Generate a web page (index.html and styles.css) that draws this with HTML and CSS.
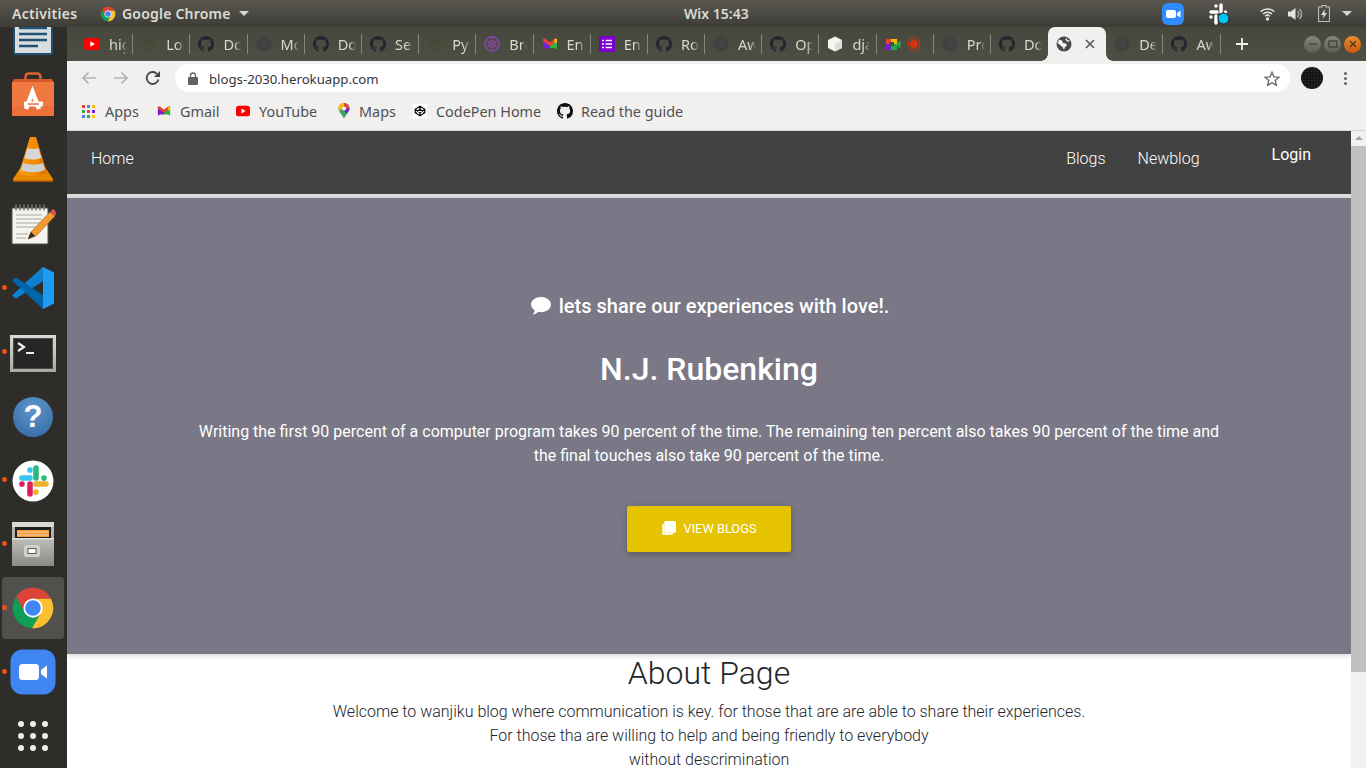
FILE: index.html
```html
<!DOCTYPE html>
<html lang="en">
<head>
<meta charset="utf-8">
<title>blogs-2030.herokuapp.com</title>
<link rel="stylesheet" href="styles.css">
</head>
<body>
<svg class="defs" width="0" height="0" aria-hidden="true">
  <defs>
    <linearGradient id="metal" x1="0" y1="0" x2="0" y2="1"><stop offset="0" stop-color="#bdbdba"/><stop offset="1" stop-color="#8a8a87"/></linearGradient>
    <linearGradient id="termframe" x1="0" y1="0" x2="0" y2="1"><stop offset="0" stop-color="#d9d9d6"/><stop offset="1" stop-color="#a9a9a6"/></linearGradient>
    <linearGradient id="cone" x1="0" y1="0" x2="1" y2="0"><stop offset="0" stop-color="#f9a01b"/><stop offset=".6" stop-color="#f28a00"/><stop offset="1" stop-color="#d96e00"/></linearGradient>
    <symbol id="gh" viewBox="0 0 16 16"><path fill-rule="evenodd" d="M8 0C3.58 0 0 3.58 0 8c0 3.54 2.29 6.53 5.47 7.59.4.07.55-.17.55-.38 0-.19-.01-.82-.01-1.49-2.01.37-2.53-.49-2.69-.94-.09-.23-.48-.94-.82-1.13-.28-.15-.68-.52-.01-.53.63-.01 1.08.58 1.23.82.72 1.21 1.87.87 2.33.66.07-.52.28-.87.51-1.07-1.78-.2-3.64-.89-3.64-3.95 0-.87.31-1.59.82-2.15-.08-.2-.36-1.02.08-2.12 0 0 .67-.21 2.2.82.64-.18 1.32-.27 2-.27.68 0 1.36.09 2 .27 1.53-1.04 2.2-.82 2.2-.82.44 1.1.16 1.92.08 2.12.51.56.82 1.27.82 2.15 0 3.07-1.87 3.75-3.65 3.95.29.25.54.73.54 1.48 0 1.07-.01 1.93-.01 2.2 0 .21.15.46.55.38A8.01 8.01 0 0 0 16 8c0-4.42-3.58-8-8-8z"/></symbol>
    <symbol id="chrome" viewBox="0 0 48 48">
      <path fill="#db4437" d="M24 14H43.6A22 22 0 0 0 5.5 12L15.34 29Z"/>
      <path fill="#0f9d58" d="M5.5 12A22 22 0 0 0 22.9 46L32.66 29H15.34Z"/>
      <path fill="#fbc02d" d="M22.9 46A22 22 0 0 0 43.6 14H24L32.66 29Z"/>
      <circle cx="24" cy="24" r="10.5" fill="#fff"/><circle cx="24" cy="24" r="8.5" fill="#4285f4"/>
    </symbol>
    <symbol id="yt" viewBox="0 0 16 16"><rect y="2" width="16" height="12" rx="3" fill="#f00"/><path d="M6.3 5.2v5.6L11 8z" fill="#fff"/></symbol>
    <symbol id="tree" viewBox="0 0 16 16"><path d="M8 15V7M8 7C6 3 3 3 1 5M8 7c2-4 5-4 7-2M8 7C7 3 5 1 4 1M8 7c1-4 3-6 4-6M8 8C6 7 3 8 2 10M8 8c2-1 5 0 6 2" fill="none" stroke="#414b33" stroke-width="2"/></symbol>
    <symbol id="globe-dark" viewBox="0 0 16 16"><circle cx="8" cy="8" r="7.500" fill="#3f4240"/><path d="M4 4c2 1 4 0 5 2s-2 2-1 4 3 1 4 0" fill="none" stroke="#454845" stroke-width="2"/></symbol>
    <symbol id="gmail" viewBox="0 0 16 16"><path d="M1 3.200 8 8.400V12H3.500L1 13.500z" fill="#7a1fd0"/><path d="M15 3.200 8 8.400V12h4.500l2.500 1.500z" fill="#2fb344"/><path d="M1 3l2 -.5L8 6.400l5-3.900 2 .5V5L8 10 1 5z" fill="#ea4335"/><path d="M12.500 3 15 2.600V6l-2.500 1.800z" fill="#fbbc04"/></symbol>
  </defs>
</svg>

<header class="topbar">
  <div class="top-left">
    <span class="activities">Activities</span>
    <svg class="top-chrome" width="16" height="16"><use href="#chrome"/></svg>
    <span class="appname">Google Chrome</span>
    <span class="caret"></span>
  </div>
  <span class="clock">Wix 15:43</span>
  <div class="top-right">
    <svg class="tray-zoom" width="22" height="22" viewBox="0 0 22 22"><rect width="22" height="22" rx="6" fill="#2d8cff"/><rect x="4" y="7" width="10" height="8" rx="2" fill="#fff"/><path d="M15 10l3.500-2.500v7L15 12.500z" fill="#fff"/></svg>
    <svg class="tray-slack" width="21" height="22" viewBox="0 0 21 22"><g fill="none" stroke="#fff" stroke-width="3.400" stroke-linecap="round"><path d="M2 9h6M7 3v.1M12 2v7M16.500 9v.1M2 14v.1M7 13v7M12 14h6"/></g><circle cx="14.500" cy="15.500" r="5.500" fill="#00c4ee" stroke="#1d1d1b"/></svg>
    <svg class="tray-wifi" width="15" height="14" viewBox="0 0 15 14"><g fill="none" stroke="#e4e4dd" stroke-width="1.500"><path d="M.7 4.600a10 10 0 0 1 13.600 0"/><path d="M3 7a6.800 6.800 0 0 1 9 0"/><path d="M5.200 9.200a3.400 3.400 0 0 1 4.600 0"/></g><circle cx="7.500" cy="12" r="1.700" fill="#e4e4dd"/></svg>
    <svg class="tray-sound" width="15" height="14" viewBox="0 0 15 14"><path d="M0 4.500h3L7.500 1v12L3 9.500H0z" fill="#e4e4dd"/><path d="M9.500 4a4 4 0 0 1 0 6M11.500 2a7 7 0 0 1 0 10" fill="none" stroke="#a9a9a2" stroke-width="1.400"/></svg>
    <svg class="tray-batt" width="12" height="17" viewBox="0 0 12 17"><path d="M4 .5h4V2h3.500v14.500H.5V2H4z" fill="none" stroke="#bdbdb6" stroke-width="1.200"/><path d="M7 4 3 10h2.500L4.500 14 9 8H6.500z" fill="#dcdcd5"/></svg>
    <span class="caret tray-caret"></span>
  </div>
</header>

<div class="desktop">
  <nav class="dock">
    <div class="dock-item dock-first">
      <svg width="48" height="48" viewBox="0 0 48 48"><rect x="4" y="-4" width="40" height="51" rx="2" fill="#1d4f71"/><rect x="6" y="-3" width="36" height="48" fill="#d9dde0"/><rect x="23" y="2" width="15" height="12" fill="#7e8a94"/><path d="M10 9h11M10 14h11M10 20h28M10 26h28M10 32h28M10 38h19" stroke="#1f5377" stroke-width="2.500"/></svg>
    </div>
    <div class="dock-item">
      <svg width="48" height="48" viewBox="0 0 48 48"><path d="M16.500 12V5q0-3.500 3.500-3.500h8q3.500 0 3.500 3.500v7" fill="none" stroke="#d9622e" stroke-width="2.500"/><path d="M5 7h38l2 4H3z" fill="#d65a28"/><rect x="3" y="10" width="42" height="24" fill="#f0793f"/><rect x="3" y="34" width="42" height="10" fill="#ec7138"/><path d="M17 37 23.500 20 30 37" fill="none" stroke="#fff" stroke-width="4.500"/><rect x="15" y="29.500" width="19" height="5" rx="1" fill="#fff"/><rect x="19" y="31.300" width="11" height="1.500" fill="#ec7138"/></svg>
    </div>
    <div class="dock-item">
      <svg width="48" height="48" viewBox="0 0 48 48"><path d="M4 43l8-12h24l8 12q0 3-2 3H6q-2 0-2-3z" fill="#e88a00"/><path d="M4 44.500h40v1.500H4z" fill="#a85400"/><path d="M21 1h6l11 36q-14 7-28 0z" fill="url(#cone)"/><path d="M18.500 12q5.500 2 11 0l2.900 10q-8.400 3-16.800 0z" fill="#d6d6d6"/><path d="M14 27q10 3.500 20 0l2.200 7q-12 4.500-24.400 0z" fill="#cfcfcf"/></svg>
    </div>
    <div class="dock-item">
      <svg width="48" height="48" viewBox="0 0 48 48"><rect x="3" y="8" width="36" height="36" rx="1" fill="#f3f3f0" stroke="#55554f"/><g stroke="#75756e" stroke-width="1.500" stroke-linecap="round"><path d="M7 5v5M11 5v5M15 5v5M19 5v5M23 5v5M27 5v5M31 5v5M35 5v5"/></g><g stroke="#a8a8a2"><path d="M7 15h26M7 19h26M7 23h24M7 27h20M7 34h12M7 38h10"/></g><path d="M19 39l3-7 19-20 5 4-19 20z" fill="#f09a30" stroke="#a9671a" stroke-width=".7"/><path d="M41 12l3-3q3 1 3 5l-1 2z" fill="#d9534f"/><path d="M19 39l3-7 4 4z" fill="#2b2b2b"/></svg>
    </div>
    <div class="dock-item has-dot">
      <svg width="48" height="48" viewBox="0 0 48 48"><path d="M34 3 45 8.500V39.500L34 45Z" fill="#1f9cf0"/><path d="M34 3V17L7 34.500 3 31.500Z" fill="#0a84d6"/><path d="M3 16.500 7 13.500 34 31V45Z" fill="#0065a9"/><path d="M34 3V17L24 23.500 16 19Z" fill="#0f7fcf"/></svg>
    </div>
    <div class="dock-item has-dot">
      <svg width="48" height="48" viewBox="0 -2 48 48"><rect x="1" y="5" width="46" height="37" fill="url(#termframe)"/><rect x="4.500" y="8.500" width="39" height="30" fill="#262625"/><rect x="4.500" y="8.500" width="39" height="30" fill="none" stroke="#4a4a48"/><path d="M9 13l6 4-6 4" fill="none" stroke="#eee" stroke-width="2.200"/><path d="M17 23h8" stroke="#eee" stroke-width="2"/></svg>
    </div>
    <div class="dock-item">
      <div class="help-ball">?</div>
    </div>
    <div class="dock-item has-dot">
      <svg width="48" height="48" viewBox="0 -1 48 48"><circle cx="24" cy="24" r="20.500" fill="#fff"/><g fill="none" stroke-width="5.600" stroke-linecap="round"><path d="M13 21H21M21 13v.1" stroke="#36c5f0"/><path d="M27 11V21M35 21v.1" stroke="#2eb67d"/><path d="M27 27H37M27 35v.1" stroke="#ecb22e"/><path d="M21 27V37M13 27v.1" stroke="#e01e5a"/></g></svg>
    </div>
    <div class="dock-item has-dot">
      <svg width="48" height="48" viewBox="0 0 48 48"><rect x="3" y="2" width="42" height="44" rx="2" fill="url(#metal)"/><rect x="3" y="2" width="42" height="5" fill="#d9d9d6"/><rect x="6" y="7" width="36" height="12" fill="#1f1f1e"/><rect x="8" y="10" width="32" height="7" fill="#f39a3d"/><path d="M8 12h32M8 15h32" stroke="#fbd19c"/><rect x="3" y="18" width="42" height="28" fill="url(#metal)"/><rect x="3" y="18" width="42" height="1.500" fill="#e0e0dd"/><rect x="15" y="25" width="16" height="12" rx="2.500" fill="#cfcfcc"/><rect x="19" y="28.500" width="8" height="5" fill="#fdfdfd" stroke="#55554f"/></svg>
    </div>
    <div class="dock-item dock-active has-dot">
      <svg width="44" height="44"><use href="#chrome"/></svg>
    </div>
    <div class="dock-item has-dot">
      <svg width="46" height="46" viewBox="0 0 46 46"><rect x=".5" y=".5" width="45" height="45" rx="12" fill="#3f86f3"/><rect x="9" y="15" width="20" height="16" rx="3.500" fill="#fff"/><path d="M31 21l6-4.500v13L31 25z" fill="#fff"/></svg>
    </div>
    <div class="dock-item">
      <div class="app-grid"><i></i><i></i><i></i><i></i><i></i><i></i><i></i><i></i><i></i></div>
    </div>
  </nav>

  <div class="browser">
    <div class="tabstrip">
      <div class="tab"><svg class="fav"><use href="#yt"/></svg><span class="tab-text">high</span></div>
      <div class="tab"><svg class="fav"><use href="#tree"/></svg><span class="tab-text">Log</span></div>
      <div class="tab"><svg class="fav gh-dark"><use href="#gh"/></svg><span class="tab-text">Doc</span></div>
      <div class="tab"><svg class="fav"><use href="#globe-dark"/></svg><span class="tab-text">Mod</span></div>
      <div class="tab"><svg class="fav gh-dark"><use href="#gh"/></svg><span class="tab-text">Doc</span></div>
      <div class="tab"><svg class="fav gh-dark"><use href="#gh"/></svg><span class="tab-text">Sea</span></div>
      <div class="tab"><svg class="fav"><use href="#tree"/></svg><span class="tab-text">Pyth</span></div>
      <div class="tab"><svg class="fav" viewBox="0 0 16 16"><circle cx="8" cy="8" r="7.200" fill="none" stroke="#8e44ad" stroke-width="1.400"/><path d="M8 2v12M3 5l10 6M13 5 3 11" stroke="#8e44ad"/><circle cx="8" cy="8" r="3.500" fill="none" stroke="#8e44ad"/></svg><span class="tab-text">Bro</span></div>
      <div class="tab"><svg class="fav"><use href="#gmail"/></svg><span class="tab-text">Eng</span></div>
      <div class="tab"><svg class="fav" viewBox="0 0 16 16"><rect width="16" height="16" fill="#7a00c8"/><path d="M6.500 4.500H13M6.500 8H13M6.500 11.500H13M3 4.500h2M3 8h2M3 11.500h2" stroke="#fff" stroke-width="1.600"/></svg><span class="tab-text">Eng</span></div>
      <div class="tab"><svg class="fav gh-dark"><use href="#gh"/></svg><span class="tab-text">Rob</span></div>
      <div class="tab"><svg class="fav"><use href="#globe-dark"/></svg><span class="tab-text">Awe</span></div>
      <div class="tab"><svg class="fav gh-dark"><use href="#gh"/></svg><span class="tab-text">Ope</span></div>
      <div class="tab"><svg class="fav" viewBox="0 0 16 16"><path d="M8 .5 15 4v8l-7 3.500L1 12V4z" fill="#f4f4f0"/><path d="M8 8v7.500L15 12V4z" fill="#dcdcd8"/></svg><span class="tab-text">dja</span></div>
      <div class="tab tab-double">
        <svg class="fav" viewBox="0 0 16 16"><rect x="1" y="3" width="11" height="11" fill="#fbbc04"/><rect x="1" y="8" width="6" height="6" fill="#7a1fd0"/><rect x="6" y="8" width="6" height="6" fill="#1fa94a"/><rect x="1" y="3" width="5" height="5" fill="#ea4335"/><rect x="4" y="6" width="5" height="4" fill="#4d4e43"/><path d="M12 7l3.500-2.500v8L12 10z" fill="#1fa94a"/></svg>
        <svg class="fav fav-rec" viewBox="0 0 14 14"><circle cx="7" cy="7" r="6" fill="none" stroke="#d8330f"/><circle cx="7" cy="7" r="4" fill="#d8330f"/></svg>
      </div>
      <div class="tab"><svg class="fav"><use href="#globe-dark"/></svg><span class="tab-text">Pro</span></div>
      <div class="tab tab-noline"><svg class="fav gh-dark"><use href="#gh"/></svg><span class="tab-text">Doc</span></div>
      <div class="tab-active">
        <svg class="fav" viewBox="0 0 16 16"><circle cx="8" cy="8" r="7.500" fill="#45474b"/><path d="M3 3.500l3 1 1 2.500 3 .5 1 2-2 1.500-1 3-1.500-3L4 9 1.500 7zM10 1.500l1.500 2.500 2.500.5-2 1.500L9.500 4z" fill="#f1f0ee"/></svg>
        <svg class="tab-close" width="10" height="10" viewBox="0 0 10 10"><path d="M1 1l8 8M9 1 1 9" stroke="#50524f" stroke-width="1.500"/></svg>
      </div>
      <div class="tab"><svg class="fav"><use href="#globe-dark"/></svg><span class="tab-text">Des</span></div>
      <div class="tab"><svg class="fav gh-dark"><use href="#gh"/></svg><span class="tab-text">Awe</span></div>
      <svg class="newtab" width="12" height="12" viewBox="0 0 12 12"><path d="M6 0v12M0 6h12" stroke="#f1f0ee" stroke-width="1.800"/></svg>
      <div class="winbtns">
        <span class="winbtn"><svg width="10" height="10" viewBox="0 0 10 10"><path d="M1 5h8" stroke="#3d3d38" stroke-width="1.200"/></svg></span>
        <span class="winbtn"><svg width="10" height="10" viewBox="0 0 10 10"><rect x="1" y="2" width="8" height="6" fill="none" stroke="#3d3d38" stroke-width="1.200"/></svg></span>
        <span class="winbtn winbtn-close"><svg width="10" height="10" viewBox="0 0 10 10"><path d="M2 2l6 6M8 2 2 8" stroke="#3d3d18" stroke-width="1.200"/></svg></span>
      </div>
    </div>

    <div class="toolbar">
      <svg class="tool-back" width="16" height="14" viewBox="0 0 16 14"><path d="M15 7H2M7.500 1.500 2 7l5.500 5.500" fill="none" stroke="#b0b1b3" stroke-width="1.700"/></svg>
      <svg class="tool-fwd" width="16" height="14" viewBox="0 0 16 14"><path d="M1 7h13M8.500 1.500 14 7l-5.500 5.500" fill="none" stroke="#b0b1b3" stroke-width="1.700"/></svg>
      <svg class="tool-reload" width="16" height="16" viewBox="0 0 16 16"><path d="M13.500 9.500A6 6 0 1 1 12 3.800" fill="none" stroke="#45474a" stroke-width="1.800"/><path d="M15 1v6H9z" fill="#45474a"/></svg>
      <div class="omnibox">
        <svg class="lock" width="10" height="13" viewBox="0 0 10 13"><path d="M2.500 6V3.500a2.500 2.500 0 0 1 5 0V6" fill="none" stroke="#5f6368" stroke-width="1.300"/><rect y="5" width="10" height="8" rx="1" fill="#5f6368"/></svg>
        <span class="url">blogs-2030.herokuapp.com</span>
        <svg class="star" width="16" height="15" viewBox="0 0 16 15"><path d="M8 1.200 10 5.800l5 .4-3.800 3.300 1.200 4.900L8 11.800l-4.400 2.600 1.200-4.900L1 6.200l5-.4z" fill="none" stroke="#5f6368" stroke-width="1.300"/></svg>
      </div>
      <span class="avatar"></span>
      <span class="menu-dots"><i></i><i></i><i></i></span>
    </div>

    <div class="bookmarks">
      <a class="bm bm-apps"><span class="apps-grid"><i class="c1"></i><i class="c2"></i><i class="c3"></i><i class="c4"></i><i class="c5"></i><i class="c6"></i><i class="c7"></i><i class="c8"></i><i class="c9"></i></span>Apps</a>
      <a class="bm bm-gmail"><svg class="bm-ico"><use href="#gmail"/></svg>Gmail</a>
      <a class="bm bm-yt"><svg class="bm-ico"><use href="#yt"/></svg>YouTube</a>
      <a class="bm bm-maps"><svg class="bm-ico bm-pin" viewBox="0 0 16 16"><path d="M8 0a5.500 5.500 0 0 1 5.500 5.500C13.500 9.500 9 12 8 16 7 12 2.500 9.500 2.500 5.500A5.500 5.500 0 0 1 8 0z" fill="#34a853"/><path d="M8 0a5.500 5.500 0 0 1 5.500 5.500l-5.500 0z" fill="#ea4335"/><path d="M2.500 5.500A5.500 5.500 0 0 1 8 0v3L4 8z" fill="#fbbc04"/><path d="M13.500 5.500c0 2-1.500 3.500-3 5L6 6z" fill="#7a1fd0"/><circle cx="8" cy="5.500" r="2" fill="#fff"/></svg>Maps</a>
      <a class="bm bm-cp"><svg class="bm-ico" viewBox="0 0 16 16"><rect width="16" height="16" fill="#fff"/><path d="M8 2.500 13.500 6v4L8 13.500 2.500 10V6zM8 2.500V6M8 13.500V10M2.500 6 8 10l5.500-4M2.500 10 8 6l5.500 4" fill="none" stroke="#111" stroke-width="1.500"/></svg>CodePen Home</a>
      <a class="bm bm-guide"><svg class="bm-ico bm-gh"><use href="#gh"/></svg>Read the guide</a>
    </div>

    <div class="viewport">
      <main class="page">
        <div class="navbar">
          <a class="nav-link">Home</a>
          <a class="nav-link nav-blogs">Blogs</a>
          <a class="nav-link">Newblog</a>
          <a class="nav-login">Login</a>
        </div>
        <div class="nav-line"></div>
        <section class="hero">
          <h5 class="hero-tag"><svg class="bubble" width="20" height="18" viewBox="0 0 21 19"><path d="M10.500 0C16.300 0 21 3.500 21 8s-4.700 8-10.500 8c-1 0-2-.1-2.900-.3C6.500 17.200 4 18.500 1.500 18.500c1.200-1.200 2.200-2.800 2.500-4.300C1.600 12.800 0 10.500 0 8 0 3.500 4.700 0 10.500 0z" fill="#fff"/></svg>lets share our experiences with love!.</h5>
          <h2 class="hero-title">N.J. Rubenking</h2>
          <p class="hero-text">Writing the first 90 percent of a computer program takes 90 percent of the time. The remaining ten percent also takes 90 percent of the time and the final touches also take 90 percent of the time.</p>
          <a class="hero-btn"><svg width="15" height="15" viewBox="0 0 14 14"><path d="M4 0h8.500A1.500 1.500 0 0 1 14 1.500V10a1 1 0 0 1-1 1H4a1 1 0 0 1-1-1V1a1 1 0 0 1 1-1z" fill="#fff"/><path d="M2 3v9h9" fill="none" stroke="#fff" stroke-width="1.600"/></svg>View Blogs</a>
        </section>
        <section class="about">
          <h2 class="about-title">About Page</h2>
          <p class="about-text">Welcome to wanjiku blog where communication is key. for those that are are able to share their experiences.<br>For those tha are willing to help and being friendly to everybody<br>without descrimination</p>
        </section>
      </main>
      <div class="scrollbar">
        <span class="scroll-arrow"></span>
        <span class="scroll-thumb"></span>
      </div>
    </div>
  </div>
</div>
</body>
</html>
```

FILE: styles.css
```css
* { box-sizing: border-box; }
html, body { margin: 0; height: 768px; overflow: hidden; }
body {
  width: 1366px;
  display: flex;
  flex-direction: column;
  font-family: "Roboto", sans-serif;
  background: #2f2d2a;
}
.defs { position: absolute; }

/* top bar */
.topbar {
  flex: 0 0 27px;
  display: flex;
  align-items: center;
  background: linear-gradient(#5a5850, #3d3c37);
  color: #dcdcd4;
  font: 600 14px "Noto Sans", sans-serif;
  position: relative;
  z-index: 2;
}
.top-left { flex: 0 0 684px; display: flex; align-items: center; padding-left: 12px; }
.activities { width: 88px; letter-spacing: .3px; }
.top-chrome { margin-right: 6px; }
.appname { width: 117px; letter-spacing: .2px; }
.caret { width: 0; height: 0; border: 5px solid transparent; border-top: 5px solid #d8d8d0; border-bottom: 0; }
.clock { flex: 0 0 66px; white-space: nowrap; font-size: 14px; }
.top-right { margin-left: auto; display: flex; align-items: center; padding-right: 14px; }
.tray-slack { margin-left: 25px; }
.tray-wifi { margin-left: 30px; }
.tray-sound { margin-left: 13px; }
.tray-batt { margin-left: 15px; }
.tray-caret { margin-left: 12px; border-width: 5px 5.500px 0; }

/* desktop */
.desktop { flex: 1; display: flex; min-height: 0; }
.dock {
  flex: 0 0 67px;
  display: flex;
  flex-direction: column;
  overflow: hidden;
  background: #2f2d2a;
}
.dock-item {
  flex: 0 0 64px;
  display: flex;
  align-items: center;
  justify-content: center;
  padding-right: 1px;
  position: relative;
}
.dock-first { margin-top: -27px; }
.has-dot::before {
  content: "";
  position: absolute;
  left: 2px;
  top: 29px;
  width: 5px;
  height: 5px;
  border-radius: 50%;
  background: #e95420;
}
.dock-active::after {
  content: "";
  position: absolute;
  left: 2px;
  right: 3px;
  top: 1px;
  bottom: 1px;
  border-radius: 4px;
  background: rgba(255, 255, 255, .17);
}
.dock-active svg { position: relative; z-index: 1; }
.dock-active.has-dot::before { z-index: 1; }
.help-ball {
  width: 40px;
  height: 40px;
  margin-top: 2px;
  border-radius: 50%;
  background: radial-gradient(circle at 50% 30%, #5f97cc, #2f66a0);
  color: #fff;
  font: 700 31px/40px "Liberation Sans", sans-serif;
  text-align: center;
}
.app-grid { display: grid; grid-template-columns: repeat(3, 6px); gap: 6px; }
.app-grid i { width: 6px; height: 6px; border-radius: 50%; background: #eeeeea; }

/* browser */
.browser { flex: 1; display: flex; flex-direction: column; min-width: 0; }
.tabstrip {
  flex: 0 0 34px;
  display: flex;
  align-items: stretch;
  padding-left: 9px;
  background: linear-gradient(#46473d, #4e4f44);
}
.tab {
  flex: 0 0 57.200px;
  display: flex;
  align-items: center;
  gap: 9px;
  padding-left: 8px;
  position: relative;
  overflow: hidden;
}
.tab::after {
  content: "";
  position: absolute;
  right: 0;
  top: 7px;
  width: 1px;
  height: 20px;
  background: #85867a;
}
.tab-noline::after { display: none; }
.fav { flex: 0 0 16px; width: 16px; height: 16px; }
.gh-dark { fill: #24262e; }
.fav-rec { flex: 0 0 14px; width: 14px; height: 14px; margin-left: -3px; }
.tab-text {
  width: 18px;
  overflow: hidden;
  white-space: nowrap;
  color: #d8d8cf;
  font: 14.500px "Noto Sans", sans-serif;
  -webkit-mask-image: linear-gradient(to right, #000 65%, transparent);
  mask-image: linear-gradient(to right, #000 65%, transparent);
}
.tab-active {
  flex: 0 0 58px;
  display: flex;
  align-items: center;
  padding-left: 8px;
  background: #f1f0ee;
  border-radius: 7px 7px 0 0;
  position: relative;
}
.tab-active::before, .tab-active::after {
  content: "";
  position: absolute;
  bottom: 0;
  width: 7px;
  height: 7px;
  background: radial-gradient(circle at 0 0, transparent 6.500px, #f1f0ee 7px);
}
.tab-active::before { left: -7px; }
.tab-active::after { right: -7px; background: radial-gradient(circle at 100% 0, transparent 6.500px, #f1f0ee 7px); }
.tab-close { margin-left: 13px; }
.newtab { align-self: center; margin-left: 15px; }
.winbtns { margin-left: auto; padding-right: 5px; display: flex; align-items: center; gap: 3px; }
.winbtn {
  width: 17px;
  height: 17px;
  border-radius: 50%;
  background: linear-gradient(#85857c, #5d5d55);
  display: flex;
  align-items: center;
  justify-content: center;
}
.winbtn-close { background: linear-gradient(#f08a2c, #c9580e); }

.toolbar {
  flex: 0 0 34px;
  display: flex;
  align-items: center;
  padding-left: 14px;
  background: #f1f0ee;
}
.tool-fwd { margin-left: 16px; }
.tool-reload { margin-left: 16px; }
.omnibox {
  flex: 0 0 1115px;
  height: 28px;
  margin-left: 14px;
  display: flex;
  align-items: center;
  padding-left: 13px;
  background: #fff;
  border-radius: 14px;
}
.url { margin-left: 11px; padding-top: 2px; color: #33373b; font: 13.200px "Noto Sans", sans-serif; }
.star { margin-left: auto; margin-right: 10px; }
.avatar {
  width: 22px;
  height: 22px;
  margin-left: 11px;
  border-radius: 50%;
  background-color: #171515;
  background-image: radial-gradient(circle, #3a3232 1px, transparent 1px);
  background-size: 3px 3px;
}
.menu-dots { margin-left: 21px; display: flex; flex-direction: column; gap: 2px; }
.menu-dots i { width: 3px; height: 3px; border-radius: 50%; background: #5f6368; }

.bookmarks {
  flex: 0 0 35px;
  display: flex;
  align-items: center;
  padding: 0 0 3px 15px;
  background: #f1f0ee;
  font: 14.400px "Noto Sans", sans-serif;
  color: #4f5154;
}
.bm { display: flex; align-items: center; gap: 9px; white-space: nowrap; }
.bm-apps { flex: 0 0 75px; }
.bm-gmail { flex: 0 0 79px; }
.bm-yt { flex: 0 0 101px; }
.bm-maps { flex: 0 0 76px; gap: 7px; }
.bm-cp { flex: 0 0 144px; }
.bm-guide { gap: 8px; }
.bm-ico { width: 14px; height: 14px; flex: none; }
.bm-pin { width: 16px; height: 16px; margin-left: -1px; }
.bm-gh { width: 16px; height: 16px; fill: #111; }
.apps-grid { display: grid; grid-template-columns: repeat(3, 3px); gap: 2px; margin-right: 1px; }
.apps-grid i { width: 3px; height: 3px; }
.c1 { background: #ea4335; } .c2 { background: #4285f4; } .c3 { background: #fbbc04; }
.c4 { background: #34a853; } .c5 { background: #ea4335; } .c6 { background: #7a1fd0; }
.c7 { background: #4285f4; } .c8 { background: #34a853; } .c9 { background: #fbbc04; }

/* page */
.viewport { flex: 1; display: flex; min-height: 0; border-top: 1px solid #d5d5d3; background: #fff; }
.page { flex: 1; min-width: 0; overflow: hidden; }
.navbar {
  height: 63px;
  display: flex;
  align-items: flex-start;
  padding: 16px 40px 0 24px;
  background: #424242;
  color: #fff;
}
.nav-link { font-size: 16px; font-weight: 300; line-height: 24px; margin-right: 32px; }
.nav-blogs { margin-left: auto; }
.nav-login { font-size: 16px; font-weight: 400; line-height: 24px; margin: -4px 0 0 40px; }
.nav-line { height: 4px; background: #dcdcdc; }
.hero {
  height: 456px;
  display: flex;
  flex-direction: column;
  align-items: center;
  padding-top: 96px;
  background: #7a7886;
  color: #fff;
  box-shadow: 0 2px 5px rgba(0, 0, 0, .16);
  position: relative;
}
.hero-tag {
  display: flex;
  align-items: center;
  gap: 8px;
  margin: 0 0 33px 2px;
  font-size: 20px;
  font-weight: 500;
  line-height: 24px;
}
.hero-title { margin: 0 0 33px; font-size: 32px; font-weight: 500; line-height: 36px; }
.hero-text { width: 1040px; margin: 0 0 38px; font-size: 16px; line-height: 24px; text-align: center; }
.hero-btn {
  width: 164px;
  height: 46px;
  display: flex;
  align-items: center;
  justify-content: center;
  gap: 7px;
  padding-bottom: 1px;
  background: #e6c300;
  border-radius: 2px;
  font-size: 12.800px;
  text-transform: uppercase;
  box-shadow: 0 2px 5px rgba(0, 0, 0, .16), 0 2px 10px rgba(0, 0, 0, .12);
}
.about { text-align: center; color: #212529; }
.about-title { margin: 1px 0 9px; font-size: 32px; font-weight: 300; line-height: 36px; }
.about-text { margin: 0; font-size: 16px; font-weight: 300; line-height: 24px; }

.scrollbar {
  flex: 0 0 15px;
  display: flex;
  flex-direction: column;
  align-items: center;
  background: #f1f1f1;
}
.scroll-arrow {
  margin-top: 5px;
  width: 0;
  height: 0;
  border: 4px solid transparent;
  border-bottom: 4px solid #a3a3a3;
  border-top: 0;
}
.scroll-thumb { flex: 0 0 526px; width: 100%; margin-top: 6px; background: #c1c1c1; }
```
